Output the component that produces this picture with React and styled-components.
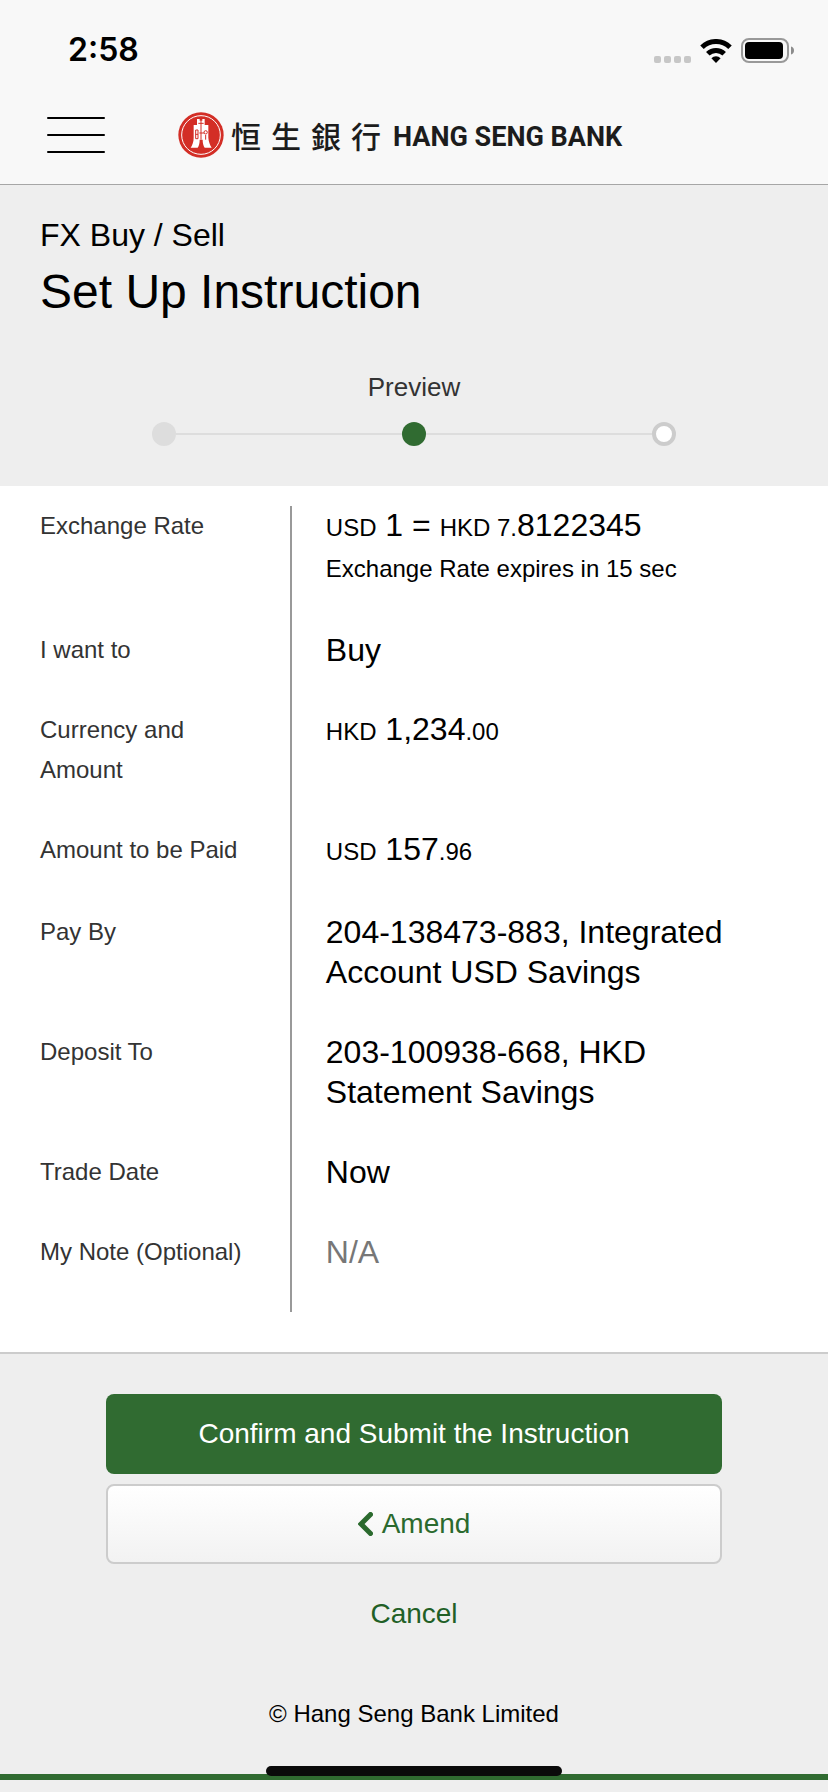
import React from "react";
import styled, { createGlobalStyle } from "styled-components";

const GlobalStyle = createGlobalStyle`
  *, *::before, *::after { box-sizing: border-box; }
  body {
    margin: 0;
    background: #eeeeee;
    color: #000;
    font-family: "Liberation Sans", Arial, sans-serif;
  }
  h1, p, dl, dt, dd { margin: 0; font-weight: 400; }
  button { font-family: inherit; cursor: pointer; }
`;

const Page = styled.div`
  display: flex;
  flex-direction: column;
  min-height: 100vh;
`;

const Header = styled.header`
  background: #f8f8f8;
  border-bottom: 1px solid #a6a6a6;
`;

const StatusBar = styled.div`
  display: flex;
  justify-content: space-between;
  align-items: center;
  padding: 26px 34px 12px 68px;
`;

const Clock = styled.span`
  font-family: Inter, sans-serif;
  font-weight: 600;
  font-size: 32px;
  line-height: 48px;
`;

const StatusIcons = styled.div`
  display: flex;
  align-items: flex-end;
  gap: 9px;
`;

const NavBar = styled.nav`
  display: flex;
  align-items: center;
  gap: 73px;
  height: 98px;
  padding: 0 47px;
`;

const MenuButton = styled.button`
  display: flex;
  flex-direction: column;
  gap: 15px;
  width: 58px;
  padding: 0;
  border: 0;
  background: none;
`;

const MenuLine = styled.span`
  width: 100%;
  height: 2px;
  border-radius: 1px;
  background: #000;
`;

const Brand = styled.a`
  display: flex;
  align-items: center;
  color: #1c1c1c;
  text-decoration: none;
  white-space: nowrap;
`;

const ChineseName = styled.span`
  display: flex;
  gap: 10px;
  margin: 0 12px 0 7px;
  font-family: "Noto Sans CJK TC", sans-serif;
  font-weight: 500;
  font-size: 30px;
  line-height: 40px;
`;

const EnglishName = styled.span`
  padding-top: 4px;
  font-family: Roboto, sans-serif;
  font-weight: 700;
  font-size: 27px;
  line-height: 40px;
`;

const Intro = styled.section`
  padding: 30px 40px 40px;
`;

const Category = styled.p`
  font-size: 32px;
  line-height: 40px;
`;

const Title = styled.h1`
  font-size: 48px;
  line-height: 74px;
`;

const StepName = styled.p`
  margin-top: 38px;
  color: #333;
  font-size: 26px;
  line-height: 40px;
  text-align: center;
`;

const Steps = styled.div`
  display: flex;
  align-items: center;
  width: 70%;
  margin: 15px auto 0;
`;

const dotLooks = {
  done: "background: #dddddd;",
  current: "background: #306b31;",
  next: "background: #fff; border: 4px solid #cccccc;",
};

const Dot = styled.span`
  flex: none;
  width: 24px;
  height: 24px;
  border-radius: 50%;
  ${({ $state }) => dotLooks[$state]}
`;

const StepLine = styled.span`
  flex: 1;
  height: 2px;
  background: #dddddd;
`;

const Details = styled.dl`
  padding: 20px 0 40px;
  background: #fff;
`;

const Row = styled.div`
  display: grid;
  grid-template-columns: 35% 1fr;
`;

const Label = styled.dt`
  padding: 0 40px 40px;
  color: #333;
  font-size: 24px;
  line-height: 40px;
`;

const Value = styled.dd`
  padding: 0 40px 40px 34px;
  border-left: 2px solid #999;
  color: ${({ $muted }) => ($muted ? "#777" : "#000")};
  font-size: 32px;
  line-height: 40px;
`;

const Amount = styled.div`
  height: 42px;
  line-height: 38px;
`;

const Small = styled.span`
  font-size: 24px;
  line-height: 24px;
`;

const Expiry = styled.p`
  font-size: 24px;
  line-height: 42px;
`;

const Actions = styled.section`
  display: flex;
  flex-direction: column;
  gap: 10px;
  padding: 40px 106px;
  border-top: 2px solid #cccccc;
`;

const buttonLooks = {
  primary: "background: #306b31; color: #fff;",
  secondary:
    "background: linear-gradient(#fff, #f2f2f2); color: #2b6a2e; border: 2px solid #cccccc;",
  plain: "background: none; color: #215f26;",
};

const ActionButton = styled.button`
  display: flex;
  align-items: center;
  justify-content: center;
  gap: 9px;
  height: 80px;
  padding: 0 20px;
  border: 0;
  border-radius: 8px;
  font-size: 28px;
  ${({ $look }) => buttonLooks[$look]}
`;

const Footer = styled.footer`
  padding-bottom: 40px;
  border-bottom: 6px solid #306b31;
  font-size: 24px;
  line-height: 40px;
  text-align: center;
`;

const HomeIndicator = styled.div`
  position: fixed;
  bottom: 16px;
  left: 50%;
  width: 296px;
  height: 10px;
  margin-left: -148px;
  border-radius: 5px;
  background: #0a0a0a;
`;

const SignalIcon = () => (
  <svg width="37" height="24" viewBox="0 0 37 24" fill="#c7c7c7" aria-hidden="true">
    {[0, 10, 20, 30].map((x) => (
      <rect key={x} x={x} y="17" width="7" height="7" rx="2" />
    ))}
  </svg>
);

const WifiIcon = () => (
  <svg width="32" height="24" viewBox="0 0 32 24" fill="none" aria-hidden="true">
    <path d="M2 8.2A20 20 0 0 1 30 8.2" stroke="#000" strokeWidth="5" />
    <path d="M7.8 14.8A11.6 11.6 0 0 1 24.2 14.8" stroke="#000" strokeWidth="5" />
    <path d="M16 24L11.4 19.2A6.6 6.6 0 0 1 20.6 19.2Z" fill="#000" />
  </svg>
);

const BatteryIcon = () => (
  <svg width="53" height="25" viewBox="0 0 53 25" fill="none" aria-hidden="true">
    <rect x="1" y="1" width="46" height="23" rx="7" stroke="#999" strokeWidth="2" />
    <rect x="4" y="4" width="38" height="17" rx="4" fill="#000" />
    <path d="M50 8.5C52 9 53 10.5 53 12.500C53 14.500 52 16 50 16.500Z" fill="#8c8c8c" />
  </svg>
);

const CoinLogo = () => (
  <svg width="46" height="46" viewBox="533 337 138 138" fill="none" aria-hidden="true">
    <circle cx="602" cy="406" r="68" fill="#d32e26" />
    <circle cx="602" cy="406" r="58" stroke="#fff" strokeWidth="3" />
    <path
      d="M590 358H598V363H606V358H613V376H624V414C625 426 629 436 634 444H613C609 438 607 430 607 420H598C598 430 596 438 592 444H571C576 436 580 426 580 414V376H590Z"
      fill="#fff"
    />
    <path
      d="M602 362V420M594 371H610M597 400H612"
      stroke="#d32e26"
      strokeWidth="3"
    />
    <path
      d="M586 391H593V417H586ZM586 404H593M616 406V420"
      stroke="#d32e26"
      strokeWidth="3"
    />
    <circle cx="616" cy="398" r="5" stroke="#d32e26" strokeWidth="3" />
  </svg>
);

const ChevronLeft = () => (
  <svg width="15" height="24" viewBox="0 0 15 24" fill="none" aria-hidden="true">
    <path d="M12.500 2.500L3 12L12.500 21.500" stroke="#2b6a2e" strokeWidth="5" strokeLinecap="round" />
  </svg>
);

const rows = [
  {
    label: "Exchange Rate",
    value: (
      <>
        <Amount>
          <Small>USD</Small> 1 = <Small>HKD 7.</Small>8122345
        </Amount>
        <Expiry>Exchange Rate expires in 15 sec</Expiry>
      </>
    ),
  },
  { label: "I want to", value: "Buy" },
  {
    label: "Currency and Amount",
    value: (
      <Amount>
        <Small>HKD</Small> 1,234<Small>.00</Small>
      </Amount>
    ),
  },
  {
    label: "Amount to be Paid",
    value: (
      <Amount>
        <Small>USD</Small> 157<Small>.96</Small>
      </Amount>
    ),
  },
  { label: "Pay By", value: "204-138473-883, Integrated Account USD Savings" },
  { label: "Deposit To", value: "203-100938-668, HKD Statement Savings" },
  { label: "Trade Date", value: "Now" },
  { label: "My Note (Optional)", value: "N/A", muted: true },
];

export default function App() {
  return (
    <Page>
      <GlobalStyle />
      <Header>
        <StatusBar>
          <Clock>2:58</Clock>
          <StatusIcons>
            <SignalIcon />
            <WifiIcon />
            <BatteryIcon />
          </StatusIcons>
        </StatusBar>
        <NavBar>
          <MenuButton type="button" aria-label="Menu">
            <MenuLine />
            <MenuLine />
            <MenuLine />
          </MenuButton>
          <Brand href="#home">
            <CoinLogo />
            <ChineseName lang="zh-Hant">
              {["恒", "生", "銀", "行"].map((character) => (
                <span key={character}>{character}</span>
              ))}
            </ChineseName>
            <EnglishName>HANG SENG BANK</EnglishName>
          </Brand>
        </NavBar>
      </Header>

      <main>
        <Intro>
          <Category>FX Buy / Sell</Category>
          <Title>Set Up Instruction</Title>
          <StepName>Preview</StepName>
          <Steps>
            <Dot $state="done" />
            <StepLine />
            <Dot $state="current" />
            <StepLine />
            <Dot $state="next" />
          </Steps>
        </Intro>

        <Details>
          {rows.map(({ label, value, muted }) => (
            <Row key={label}>
              <Label>{label}</Label>
              <Value $muted={muted}>{value}</Value>
            </Row>
          ))}
        </Details>

        <Actions>
          <ActionButton type="button" $look="primary">
            Confirm and Submit the Instruction
          </ActionButton>
          <ActionButton type="button" $look="secondary">
            <ChevronLeft />
            Amend
          </ActionButton>
          <ActionButton type="button" $look="plain">
            Cancel
          </ActionButton>
        </Actions>
      </main>

      <Footer>© Hang Seng Bank Limited</Footer>
      <HomeIndicator />
    </Page>
  );
}
